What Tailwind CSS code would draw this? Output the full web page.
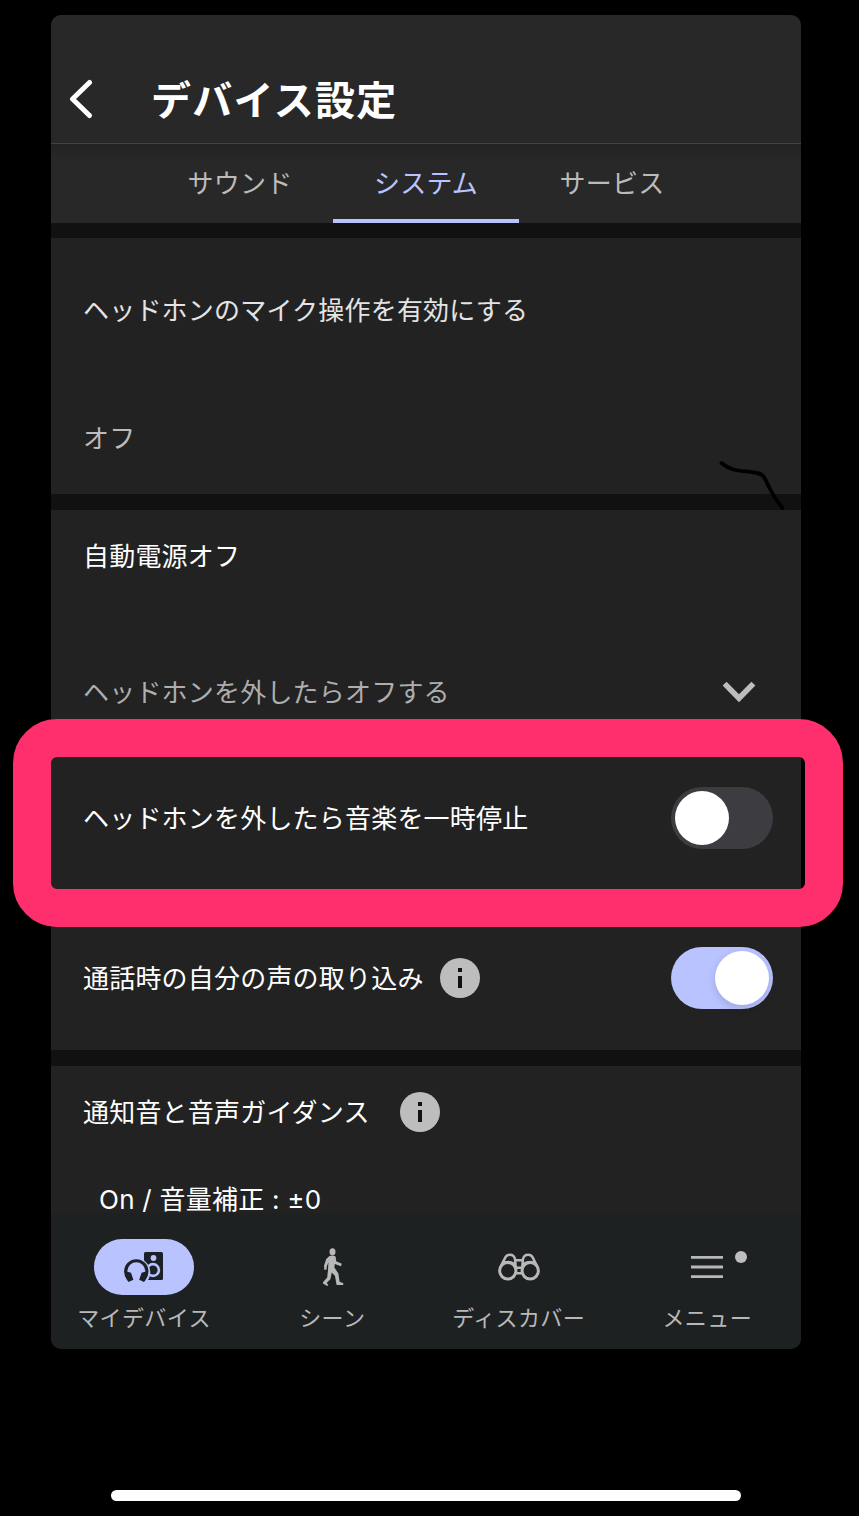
<!DOCTYPE html>
<html lang="ja">
<head>
    <meta charset="UTF-8">
    <meta name="viewport" content="width=device-width, initial-scale=1.0">
    <title>デバイス設定</title>
    <!-- Tailwind CSS for styling -->
    <script src="https://cdn.jsdelivr.net/npm/@tailwindcss/browser@4"></script>
    <style>
        body {
            font-family: 'Noto Sans CJK JP', sans-serif;
        }
    </style>
</head>
<body class="relative h-[1516px] overflow-hidden bg-black pt-[15px] pl-[51px] text-[26px] leading-[38px] tracking-[0.2px] text-white">

    <div class="flex h-[1334px] w-[750px] flex-col overflow-hidden rounded-[10px] bg-[#111111]">

        <!-- Header -->
        <header class="flex h-[129px] shrink-0 items-end border-b border-[#434343] bg-[#282828] pb-[14px]">
            <button class="ml-[18px] flex h-[60px] w-[26px] items-center">
                <svg class="h-[40px] w-[26px]" viewBox="0 0 26 40" fill="none" stroke="currentColor" stroke-width="5" stroke-linecap="round" stroke-linejoin="round">
                    <path d="M20.5 3.5 3.5 20 20.5 36.5" />
                </svg>
            </button>
            <h1 class="mb-px ml-[56px] text-[40px] leading-[60px] font-bold tracking-[1.3px]">デバイス設定</h1>
        </header>

        <!-- Tabs -->
        <nav class="flex h-[79px] shrink-0 justify-center bg-gradient-to-b from-[#222222] to-[#282828] to-20% text-[#bbbbbb]">
            <a class="flex w-[186px] items-center justify-center border-b-4 border-transparent">サウンド</a>
            <a class="flex w-[186px] items-center justify-center border-b-4 border-[#b9c3ff] text-[#b9c3ff]">システム</a>
            <a class="flex w-[186px] items-center justify-center border-b-4 border-transparent">サービス</a>
        </nav>

        <!-- Mic control -->
        <section class="mt-[15px] h-[256px] shrink-0 bg-[#222222] px-8 pt-[52px]">
            <p class="text-[#e4e4e4]">ヘッドホンのマイク操作を有効にする</p>
            <p class="mt-[90px] text-[#bbbbbb]">オフ</p>
        </section>

        <!-- Power and wearing detection -->
        <section class="mt-4 h-[540px] shrink-0 bg-[#222222] pr-7 pl-8">
            <div class="flex h-[92px] items-center pb-0.5">自動電源オフ</div>
            <div class="mt-11 flex h-[92px] items-center justify-between pr-[17px] text-[#aeaeae]">
                <span class="pb-0.5">ヘッドホンを外したらオフする</span>
                <svg class="h-[22px] w-[34px]" viewBox="0 0 34 22" fill="none" stroke="#bdbdbd" stroke-width="5.6">
                    <path d="M2.6 2.6 17 17.2 31.4 2.6" />
                </svg>
            </div>
            <div class="flex h-40 items-center justify-between">
                <span class="pb-0.5">ヘッドホンを外したら音楽を一時停止</span>
                <div class="h-[62px] w-[102px] rounded-full bg-[#3d3c41] p-1">
                    <div class="size-[54px] rounded-full bg-white"></div>
                </div>
            </div>
            <div class="flex h-[152px] items-center pt-2">
                <span class="pb-0.5">通話時の自分の声の取り込み</span>
                <svg class="ml-4 size-10" viewBox="0 0 40 40">
                    <circle cx="20" cy="20" r="20" fill="#bdbdbd" />
                    <path d="M18 10h4v4h-4zM18 18h4v12h-4z" fill="#111111" />
                </svg>
                <div class="ml-auto flex h-[62px] w-[102px] justify-end rounded-full bg-[#b9c3ff] p-1">
                    <div class="size-[54px] rounded-full bg-white shadow-[0_3px_8px_rgba(0,0,0,0.15)]"></div>
                </div>
            </div>
        </section>

        <!-- Voice guidance -->
        <section class="mt-4 h-[147px] shrink-0 bg-[#222222] px-8">
            <div class="flex h-[92px] items-center">
                <span class="pb-0.5">通知音と音声ガイダンス</span>
                <svg class="ml-[30px] size-10" viewBox="0 0 40 40">
                    <circle cx="20" cy="20" r="20" fill="#bdbdbd" />
                    <path d="M18 10h4v4h-4zM18 18h4v12h-4z" fill="#111111" />
                </svg>
            </div>
            <div class="flex h-[55px] items-end pl-4 font-['Inter','Noto_Sans_CJK_JP',sans-serif] leading-[26px] tracking-[0.25px] whitespace-pre">On / 音量補正 : ±0</div>
        </section>

        <!-- Bottom navigation -->
        <nav class="grid h-[136px] shrink-0 grid-cols-4 bg-[#1e2122] pt-[26px] text-[22px] leading-8 tracking-[0.4px] text-[#b8b8b8]">
            <a class="flex flex-col items-center pr-[1.5px]">
                <span class="flex h-14 w-[100px] items-center justify-center rounded-full bg-[#b9c3ff]">
                    <!-- Headphones in front of a speaker -->
                    <svg class="h-[32px] w-[40px]" viewBox="0 0 40 32">
                        <rect x="20" y="1" width="19" height="28" rx="1.5" fill="#1b2126" />
                        <circle cx="29.5" cy="7" r="2.9" fill="#b9c3ff" />
                        <circle cx="29" cy="19" r="7.2" fill="#b9c3ff" />
                        <circle cx="29" cy="19" r="4.6" fill="#1b2126" />
                        <circle cx="12.3" cy="21.3" r="14" fill="#b9c3ff" />
                        <path d="M4.2 27.2A10.6 10.6 0 1 1 20.4 27.2" fill="none" stroke="#1b2126" stroke-width="3.2" />
                        <path d="M.8 20 7 21.8 9.4 28.8 4.6 31Q.8 27 .8 20zM23.8 20 17.6 21.8 15.2 28.8 20 31Q23.8 27 23.8 20z" fill="#1b2126" />
                    </svg>
                </span>
                <span class="mt-[5px]">マイデバイス</span>
            </a>
            <a class="flex flex-col items-center">
                <span class="flex h-14 items-center pl-0.5">
                    <svg class="h-[38px] w-[22px]" viewBox="0 0 22 38" fill="#b8b8b8">
                        <ellipse cx="10.5" cy="3.8" rx="3" ry="3.5" />
                        <path d="M7.5 8Q11 6.7 13.6 8.6L14.2 13.2 19.8 15.8 19 18.2 12.8 16 12.4 19.4 16.4 25.6 17.6 33.8 21.4 35.2 21.2 37 14.6 37 13 28 9.8 24.6 8.4 31.2 4.6 35 6.4 37 5.4 38 .8 35.6 1.2 34 5.2 29.4 6 22 6.4 14.2 4.8 18.4 4.6 21.6 2.4 22 2 17.8 4.2 11Z" />
                    </svg>
                </span>
                <span class="mt-[5px]">シーン</span>
            </a>
            <a class="flex flex-col items-center pr-0.5">
                <span class="flex h-14 items-center">
                    <svg class="h-[28px] w-[42px]" viewBox="0 0 42 28" fill="none" stroke="#b8b8b8" stroke-width="2.5">
                        <circle cx="9.8" cy="17.8" r="8.2" stroke-width="3" />
                        <circle cx="32.2" cy="17.8" r="8.2" stroke-width="3" />
                        <path d="M2.4 14 7.5 4.2Q8.8 1.8 11.8 1.8 16 1.8 17 6L17.8 14.8M39.6 14 34.5 4.2Q33.2 1.8 30.2 1.8 26 1.8 25 6L24.2 14.8M6.5 9.5Q12.5 7.8 17 11.5M35.5 9.5Q29.5 7.8 25 11.5M17 7.2H25M17.5 14.8H24.5M17.5 20.2H24.5" />
                    </svg>
                </span>
                <span class="mt-[5px]">ディスカバー</span>
            </a>
            <a class="flex flex-col items-center">
                <span class="relative flex h-14 items-center">
                    <svg class="h-[22px] w-[32px]" viewBox="0 0 32 22" fill="#b8b8b8">
                        <path d="M0 0h32v2.8H0zM0 9.6h32v2.8H0zM0 19.2h32v2.8H0z" />
                    </svg>
                    <span class="absolute top-[12px] left-[44px] size-3 rounded-full bg-[#bebebe]"></span>
                </span>
                <span class="mt-[5px]">メニュー</span>
            </a>
        </nav>
    </div>

    <!-- Home indicator -->
    <div class="mt-[141px] ml-[60px] h-[11px] w-[630px] rounded-full bg-white"></div>

    <!-- Highlight frame and pen stroke over the settings -->
    <div class="absolute top-[718.5px] left-[12.5px] h-[208.5px] w-[830.5px] rounded-[44px] border-[38px] border-[#ff2f6d]"></div>
    <svg class="absolute top-[455px] left-[715px] h-[60px] w-[75px]" viewBox="0 0 75 60" fill="none" stroke="#000000" stroke-width="3.8" stroke-linecap="round">
        <path d="M6.5 8C18 18 30 15 42 18C49 19 50 24 54 32C59 43 63 47 67.5 53" />
    </svg>

</body>
</html>
